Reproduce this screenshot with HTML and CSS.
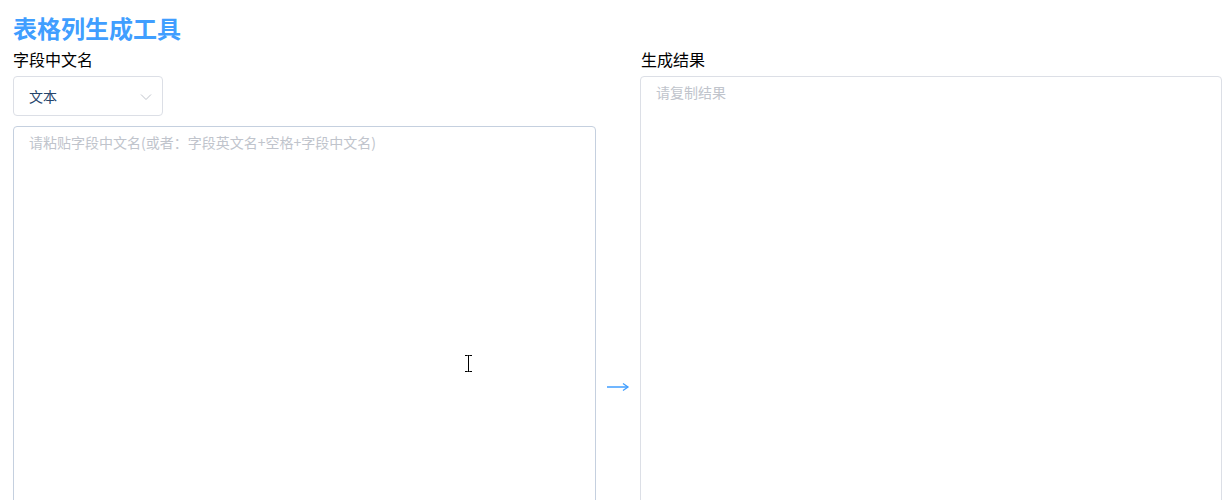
FILE: index.html
```html
<!DOCTYPE html>
<html lang="zh-CN">
<head>
    <meta charset="UTF-8">
    <meta name="viewport" content="width=device-width, initial-scale=1.0">
    <title>表格列生成工具</title>
    <link rel="stylesheet" href="styles.css">
</head>
<body>
    <div class="app">
        <h1 class="title">表格列生成工具</h1>

        <div class="main">
            <div class="col col-left">
                <p class="label">字段中文名</p>

                <div class="select">
                    <span class="select-value">文本</span>
                    <svg class="select-arrow" width="12" height="8" viewBox="0 0 12 8">
                        <polyline points="1,1.5 6,6.5 11,1.5" fill="none" stroke="#c0c4cc" stroke-width="1"/>
                    </svg>
                </div>

                <div class="area-wrap">
                    <textarea class="area area-left" placeholder="请粘贴字段中文名(或者：字段英文名+空格+字段中文名)"></textarea>
                    <svg class="cursor" width="9" height="17" viewBox="0 0 9 17">
                        <path d="M1 0.5h2.5M5.5 0.5H8M4.5 1v15M1 16.5h2.5M5.5 16.5H8" stroke="#000" stroke-width="1" fill="none"/>
                        <path d="M3.5 0.5h2M3.5 16.5h2" stroke="#000" stroke-width="1"/>
                    </svg>
                </div>
            </div>

            <div class="middle">
                <svg class="arrow" width="24" height="10" viewBox="0 0 24 10">
                    <path d="M1 5h21" stroke="#409eff" stroke-width="1.5"/>
                    <path d="M17 1.5l5 3.5-5 3.5" fill="none" stroke="#409eff" stroke-width="1.3"/>
                </svg>
            </div>

            <div class="col col-right">
                <p class="label">生成结果</p>
                <textarea class="area area-right" placeholder="请复制结果"></textarea>
            </div>
        </div>
    </div>
</body>
</html>
```

FILE: styles.css
```css
* {
    margin: 0;
    padding: 0;
    box-sizing: border-box;
}

html, body {
    overflow: hidden;
}

body {
    background: #fff;
    font-family: "Noto Sans CJK SC", "Noto Sans", sans-serif;
    color: #000;
}

.app {
    padding: 12px 7px 0 13px;
}

.title {
    font-size: 24px;
    line-height: 32px;
    font-weight: bold;
    color: #409eff;
}

.main {
    display: flex;
    margin-top: 4px;
}

.col {
    display: flex;
    flex-direction: column;
}

.col-left {
    width: 583px;
}

.col-right {
    width: 582px;
}

.label {
    font-size: 16px;
    line-height: 22px;
    margin-bottom: 6px;
}

.col-right .label {
    padding-left: 1px;
}

.select {
    width: 150px;
    height: 40px;
    border: 1px solid #dcdfe6;
    border-radius: 4px;
    display: flex;
    align-items: center;
    justify-content: space-between;
    padding: 0 10px 0 15px;
    margin-bottom: 10px;
}

.select-value {
    font-size: 14px;
    color: #25446b;
}

.select-arrow {
    display: block;
    margin-top: 1px;
}

.area-wrap {
    position: relative;
}

.area {
    display: block;
    width: 100%;
    resize: none;
    outline: none;
    font-family: inherit;
    font-size: 14px;
    line-height: 1.5;
    padding: 5px 15px;
    border-radius: 4px;
    background: #fff;
}

.area::placeholder {
    color: #c0c4cc;
}

.area-left {
    height: 520px;
    border: 1px solid #c5d0df;
}

.area-right {
    height: 570px;
    border: 1px solid #dcdfe6;
}

.cursor {
    position: absolute;
    left: 451px;
    top: 229px;
}

.middle {
    width: 44px;
    padding-top: 74px;
    display: flex;
    justify-content: center;
}

.arrow {
    display: block;
    margin-top: 260px;
}
```
